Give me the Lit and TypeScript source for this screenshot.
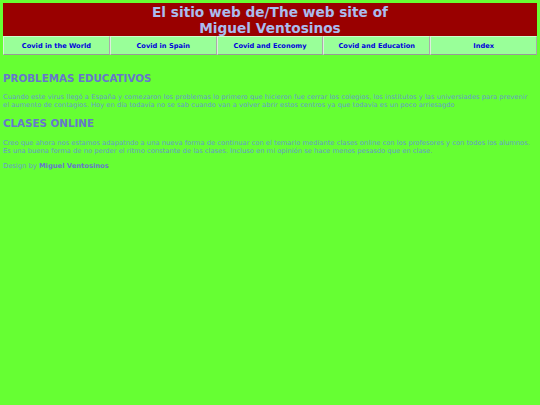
import { LitElement, html, css } from "lit";
import { customElement } from "lit/decorators.js";

@customElement("app-root")
export class AppRoot extends LitElement {
  static styles = css`
    :host { display: block; min-height: 405px; background: #66ff33; font-family: "DejaVu Sans", sans-serif; color: #6699cc; font-size: 6.75px; line-height: 8px; padding: 3px; box-sizing: border-box; }
    .banner { background: #990000; color: #aabbee; font-size: 13.7px; font-weight: bold; line-height: 16.5px; padding-top: 0.5px; box-sizing: border-box; text-align: center; height: 33px; }
    nav { display: grid; grid-template-columns: repeat(5, 1fr); height: 19px; }
    nav a { display: flex; align-items: center; justify-content: center; background: #99ff99; color: #0000dd; font-weight: bold; font-size: 6.65px; border: 1px solid; border-color: #ccffcc #aaaaaa #999999 #ddeedd; text-decoration: none; }
    h2 { margin: 0; font-size: 10.3px; line-height: 14px; color: #6677cc; font-weight: bold; }
    .h1 { margin-top: 16px; }
    p { margin: 0; }
    .p1 { margin-top: 8px; font-size: 6.65px; letter-spacing: 0.065px; }
    .wide { display: block; letter-spacing: 0.055px; }
    .h2 { margin-top: 7px; }
    .p2 { margin-top: 8.5px; }
    .p3 { margin-top: 7px; }
    b { color: #6677cc; }
  `;
  render() {
    return html`
      <div class="banner">El sitio web de/The web site of<br />Miguel Ventosinos</div>
      <nav>
        <a href="#">Covid in the World</a>
        <a href="#">Covid in Spain</a>
        <a href="#">Covid and Economy</a>
        <a href="#">Covid and Education</a>
        <a href="#">Index</a>
      </nav>
      <h2 class="h1">PROBLEMAS EDUCATIVOS</h2>
      <p class="p1">Cuando este virus llegó a España y comezaron los problemas lo primero que hicieron fue cerrar los colegios, los institutos y las universiades para prevenir <span class="wide">el aumento de contagios. Hoy en día todavía no se sab cuando van a volver abrir estos centros ya que todavía es un poco arriesagdo</span></p>
      <h2 class="h2">CLASES ONLINE</h2>
      <p class="p2">Creo que ahora nos estamos adapatndo a una nueva forma de continuar con el temario mediante clases online con los profesores y con todos los alumnos. Es una buena forma de no perder el ritmo constante de las clases. Incluso en mi opinión se hace menos pesasdo que en clase.</p>
      <p class="p3">Design by <b>Miguel Ventosinos</b></p>
    `;
  }
}
